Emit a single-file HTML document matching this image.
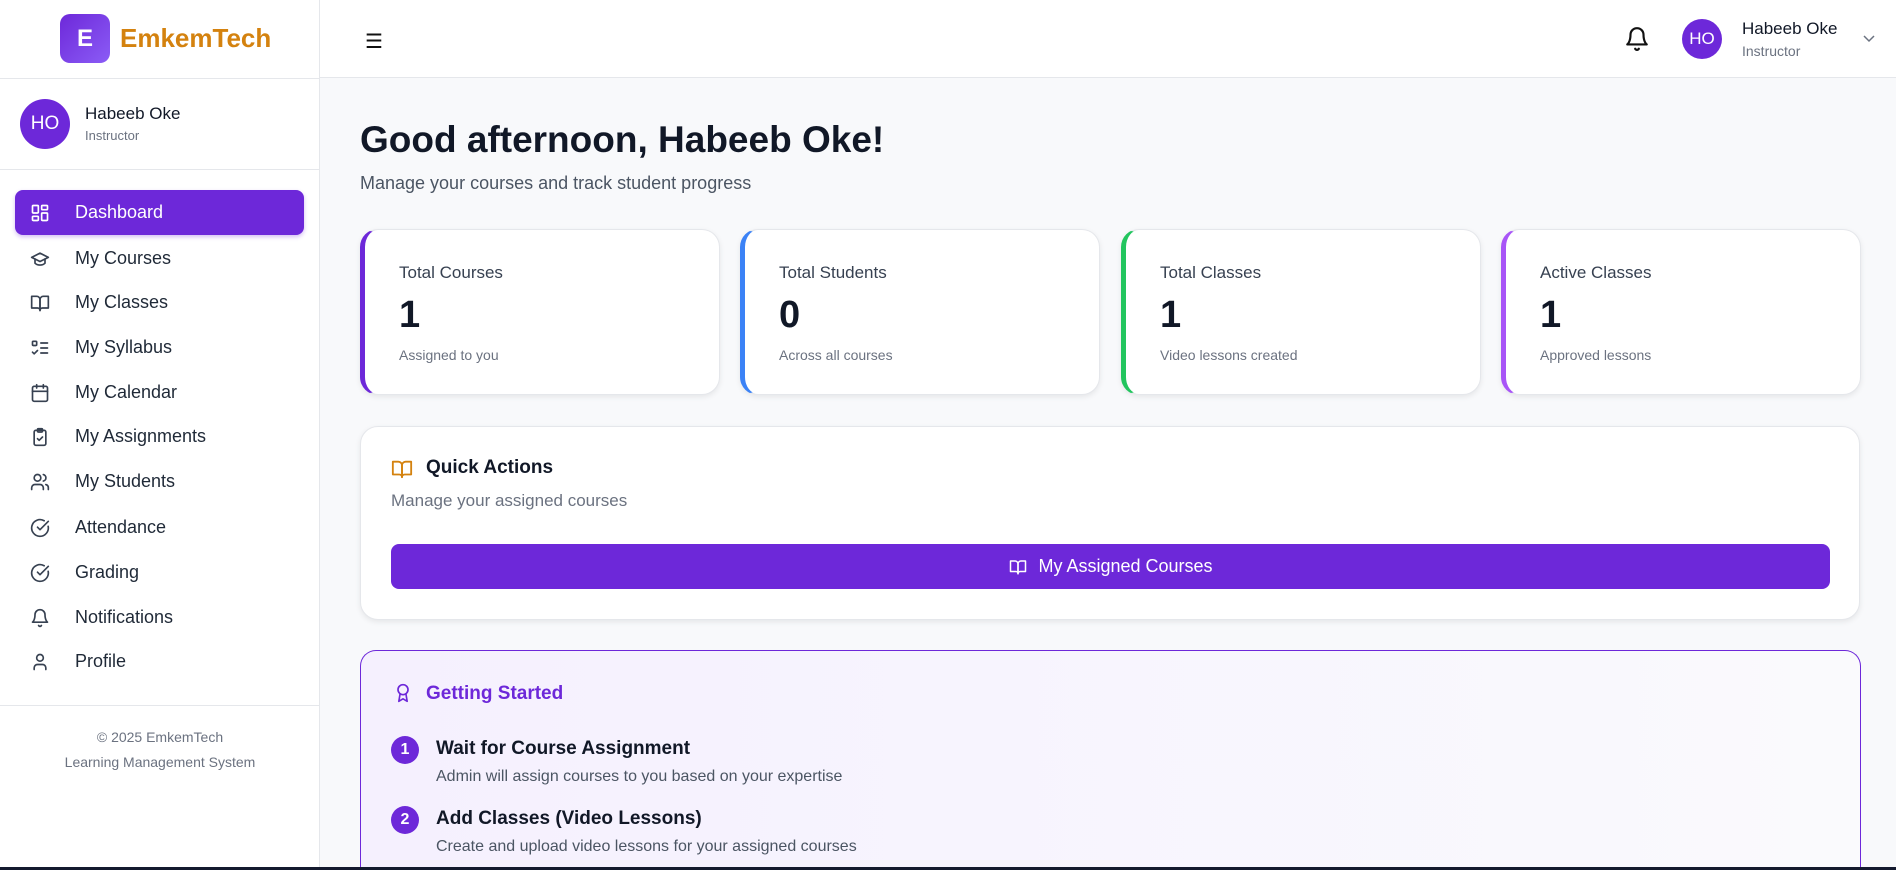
<!DOCTYPE html>
<html style="height:870px;overflow:hidden"><head><meta charset="utf-8"><style>
*{box-sizing:border-box;margin:0;padding:0}
body{width:1896px;height:870px;overflow:hidden;background:#f8f9fb;font-family:"Liberation Sans",sans-serif;position:relative;color:#111827}
.abs{position:absolute}
.side{left:0;top:0;width:320px;height:870px;background:#fff;border-right:1px solid #e5e7eb}
.hdr{left:320px;top:0;width:1576px;height:78px;background:#fff;border-bottom:1px solid #e5e7eb}
.nav{left:15px;width:289px;height:45px;display:flex;align-items:center;font-size:18px;color:#1f2937;border-radius:8px}
.nav svg{position:absolute;left:15px;width:20px;height:20px;fill:none;stroke:#374151;stroke-width:2;stroke-linecap:round;stroke-linejoin:round}
.nav span{position:absolute;left:60px}
.card{background:#fff;border-radius:18px;box-shadow:0 2px 6px rgba(0,0,0,.08);border:1px solid #e5e7eb}
.stat{top:229px;width:360px;height:166px}
.stat .t{position:absolute;left:34px;top:33px;font-size:17px;color:#374151}
.stat .n{position:absolute;left:34px;top:64px;font-size:38px;font-weight:bold;color:#111827}
.stat .s{position:absolute;left:34px;top:117px;font-size:14px;color:#6b7280}
.num{width:28px;height:28px;border-radius:50%;background:#6d28d9;color:#fff;font-weight:bold;font-size:16px;display:flex;align-items:center;justify-content:center}
</style></head><body>
<div class="abs side"></div>
<div class="abs hdr"></div>
<div class="abs" style="left:60px;top:14px;width:50px;height:49px;border-radius:10px;background:linear-gradient(135deg,#6d28d9,#8b5cf6);color:#fff;font-weight:bold;font-size:24px;display:flex;align-items:center;justify-content:center">E</div>
<div class="abs" style="left:120px;top:23px;font-size:26px;font-weight:bold;color:#d4820f">EmkemTech</div>
<div class="abs" style="left:0;top:78px;width:320px;border-top:1px solid #e5e7eb"></div>
<div class="abs" style="left:20px;top:99px;width:50px;height:50px;border-radius:50%;background:#6d28d9;color:#fff;font-size:19px;display:flex;align-items:center;justify-content:center">HO</div>
<div class="abs" style="left:85px;top:104px;font-size:17px;color:#111827">Habeeb Oke</div>
<div class="abs" style="left:85px;top:128px;font-size:13px;color:#6b7280">Instructor</div>
<div class="abs" style="left:0;top:169px;width:320px;border-top:1px solid #e5e7eb"></div>

<div class="abs nav" style="top:190px;background:#6d28d9;color:#fff;box-shadow:0 2px 4px rgba(109,40,217,.3)"><svg viewBox="0 0 24 24" style="stroke:#fff"><rect x="3" y="3" width="7" height="9" rx="1"/><rect x="14" y="3" width="7" height="5" rx="1"/><rect x="14" y="12" width="7" height="9" rx="1"/><rect x="3" y="16" width="7" height="5" rx="1"/></svg><span>Dashboard</span></div>
<div class="abs nav" style="top:236px"><svg viewBox="0 0 24 24"><path d="M22 10 12 5 2 10l10 5 10-5z"/><path d="M6 12v5c3 3 9 3 12 0v-5"/></svg><span>My Courses</span></div>
<div class="abs nav" style="top:280px"><svg viewBox="0 0 24 24"><path d="M2 4h6a4 4 0 0 1 4 4v13a3 3 0 0 0-3-3H2z"/><path d="M22 4h-6a4 4 0 0 0-4 4v13a3 3 0 0 1 3-3h7z"/></svg><span>My Classes</span></div>
<div class="abs nav" style="top:325px"><svg viewBox="0 0 24 24"><rect x="3" y="4" width="5" height="5" rx="1"/><path d="m3 17 2 2 4-4M13 6h8M13 12h8M13 18h8"/></svg><span>My Syllabus</span></div>
<div class="abs nav" style="top:370px"><svg viewBox="0 0 24 24"><rect x="3" y="4" width="18" height="18" rx="2"/><path d="M16 2v4M8 2v4M3 10h18"/></svg><span>My Calendar</span></div>
<div class="abs nav" style="top:414px"><svg viewBox="0 0 24 24"><rect x="5" y="4" width="14" height="18" rx="2"/><rect x="9" y="2" width="6" height="4" rx="1"/><path d="m9 14 2 2 4-4"/></svg><span>My Assignments</span></div>
<div class="abs nav" style="top:459px"><svg viewBox="0 0 24 24"><path d="M16 21v-2a4 4 0 0 0-4-4H6a4 4 0 0 0-4 4v2"/><circle cx="9" cy="7" r="4"/><path d="M22 21v-2a4 4 0 0 0-3-3.9M16 3.1a4 4 0 0 1 0 7.8"/></svg><span>My Students</span></div>
<div class="abs nav" style="top:505px"><svg viewBox="0 0 24 24"><path d="M21.8 10A10 10 0 1 1 17 3.3"/><path d="m9 11 3 3L22 4"/></svg><span>Attendance</span></div>
<div class="abs nav" style="top:550px"><svg viewBox="0 0 24 24"><path d="M21.8 10A10 10 0 1 1 17 3.3"/><path d="m9 11 3 3L22 4"/></svg><span>Grading</span></div>
<div class="abs nav" style="top:595px"><svg viewBox="0 0 24 24"><path d="M6 8a6 6 0 0 1 12 0c0 7 3 9 3 9H3s3-2 3-9"/><path d="M10.3 21a1.9 1.9 0 0 0 3.4 0"/></svg><span>Notifications</span></div>
<div class="abs nav" style="top:639px"><svg viewBox="0 0 24 24"><circle cx="12" cy="7" r="4"/><path d="M19 21v-2a4 4 0 0 0-4-4H9a4 4 0 0 0-4 4v2"/></svg><span>Profile</span></div>
<div class="abs" style="left:0;top:705px;width:320px;border-top:1px solid #e5e7eb"></div>
<div class="abs" style="left:0;top:725px;width:320px;text-align:center;font-size:14px;color:#6b7280;line-height:25px">© 2025 EmkemTech<br>Learning Management System</div>

<div class="abs" style="left:365px;top:29px;font-size:20px;color:#111">☰</div>
<svg class="abs" style="left:1624px;top:25px" width="26" height="28" viewBox="0 0 24 24" fill="none" stroke="#111" stroke-width="2" stroke-linecap="round" stroke-linejoin="round"><path d="M6 8a6 6 0 0 1 12 0c0 7 3 9 3 9H3s3-2 3-9"/><path d="M10.3 21a1.9 1.9 0 0 0 3.4 0"/></svg>
<div class="abs" style="left:1682px;top:19px;width:40px;height:40px;border-radius:50%;background:#6d28d9;color:#fff;font-size:17px;display:flex;align-items:center;justify-content:center">HO</div>
<div class="abs" style="left:1742px;top:19px;font-size:17px;color:#111827">Habeeb Oke</div>
<div class="abs" style="left:1742px;top:43px;font-size:14px;color:#6b7280">Instructor</div>
<svg class="abs" style="left:1862px;top:33px" width="14" height="10" viewBox="0 0 14 10" fill="none" stroke="#6b7280" stroke-width="1.5"><path d="M2 3l5 5 5-5"/></svg>

<div class="abs" style="left:360px;top:119px;font-size:37px;font-weight:bold;color:#111827">Good afternoon, Habeeb Oke!</div>
<div class="abs" style="left:360px;top:173px;font-size:18px;color:#4b5563">Manage your courses and track student progress</div>

<div class="abs card stat" style="left:360px;border-left:5px solid #6d28d9"><div class="t">Total Courses</div><div class="n">1</div><div class="s">Assigned to you</div></div>
<div class="abs card stat" style="left:740px;border-left:5px solid #3b82f6"><div class="t">Total Students</div><div class="n">0</div><div class="s">Across all courses</div></div>
<div class="abs card stat" style="left:1121px;border-left:5px solid #22c55e"><div class="t">Total Classes</div><div class="n">1</div><div class="s">Video lessons created</div></div>
<div class="abs card stat" style="left:1501px;border-left:5px solid #a855f7"><div class="t">Active Classes</div><div class="n">1</div><div class="s">Approved lessons</div></div>

<div class="abs card" style="left:360px;top:426px;width:1500px;height:194px"></div>
<svg class="abs" style="left:390px;top:458px" width="24" height="22" viewBox="0 0 24 24" fill="none" stroke="#d4820f" stroke-width="2" stroke-linejoin="round"><path d="M2 4h6a4 4 0 0 1 4 4v13a3 3 0 0 0-3-3H2z"/><path d="M22 4h-6a4 4 0 0 0-4 4v13a3 3 0 0 1 3-3h7z"/></svg>
<div class="abs" style="left:426px;top:457px;font-size:19px;font-weight:bold;color:#111827">Quick Actions</div>
<div class="abs" style="left:391px;top:491px;font-size:17px;color:#6b7280">Manage your assigned courses</div>
<div class="abs" style="left:391px;top:544px;width:1439px;height:45px;background:#6d28d9;border-radius:8px;color:#fff;font-size:18px;display:flex;align-items:center;justify-content:center"><svg width="20" height="18" viewBox="0 0 24 24" fill="none" stroke="#fff" stroke-width="2" stroke-linejoin="round" style="margin-right:10px"><path d="M2 4h6a4 4 0 0 1 4 4v13a3 3 0 0 0-3-3H2z"/><path d="M22 4h-6a4 4 0 0 0-4 4v13a3 3 0 0 1 3-3h7z"/></svg>My Assigned Courses</div>

<div class="abs" style="left:360px;top:650px;width:1501px;height:220px;border:1.5px solid #6d28d9;border-bottom:none;border-radius:16px 16px 0 0;background:linear-gradient(90deg,#f5f0fe,#fafafd)"></div>
<svg class="abs" style="left:393px;top:681px" width="20" height="24" viewBox="0 0 24 24" fill="none" stroke="#6d28d9" stroke-width="2" stroke-linejoin="round"><circle cx="12" cy="8" r="6"/><path d="M15.5 13 17 22l-5-3-5 3 1.5-9"/></svg>
<div class="abs" style="left:426px;top:683px;font-size:19px;font-weight:bold;color:#6d28d9">Getting Started</div>
<div class="abs num" style="left:391px;top:736px">1</div>
<div class="abs" style="left:436px;top:738px;font-size:19px;font-weight:bold;color:#111827">Wait for Course Assignment</div>
<div class="abs" style="left:436px;top:768px;font-size:16px;color:#4b5563">Admin will assign courses to you based on your expertise</div>
<div class="abs num" style="left:391px;top:806px">2</div>
<div class="abs" style="left:436px;top:808px;font-size:19px;font-weight:bold;color:#111827">Add Classes (Video Lessons)</div>
<div class="abs" style="left:436px;top:838px;font-size:16px;color:#4b5563">Create and upload video lessons for your assigned courses</div>
<div class="abs" style="left:0;top:867px;width:1896px;height:3px;background:#141a2e"></div>
</body></html>
